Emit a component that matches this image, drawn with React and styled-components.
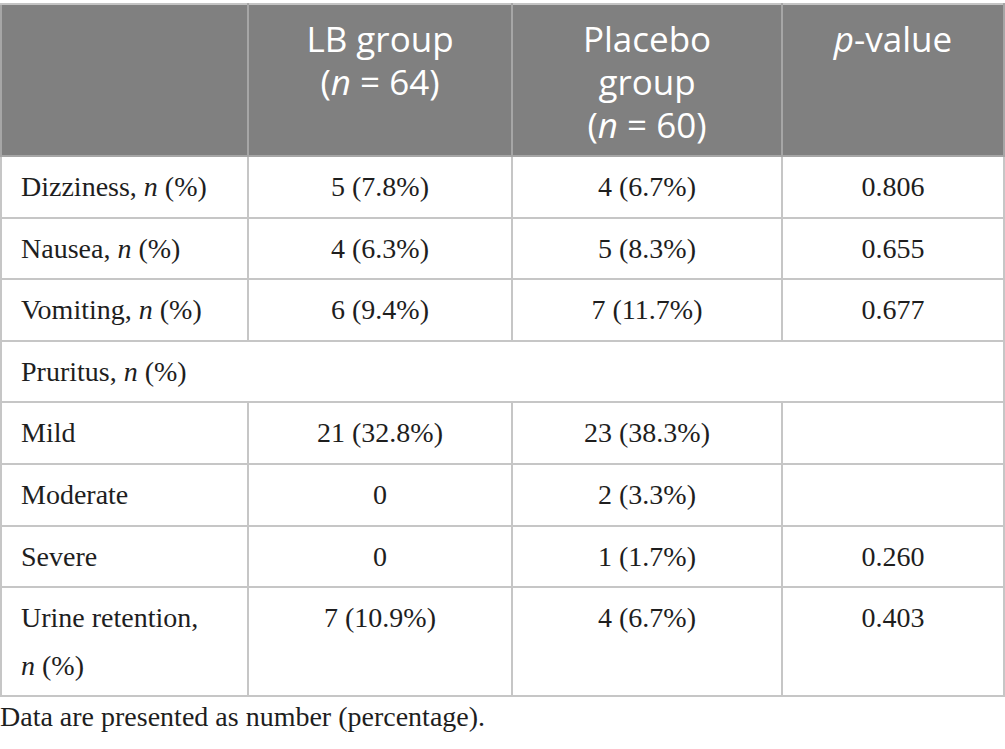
import React from "react";
import styled, { createGlobalStyle } from "styled-components";

const GlobalStyle = createGlobalStyle`
  html, body {
    margin: 0;
    padding: 0;
    background: #ffffff;
  }
`;

const Page = styled.div`
  padding-top: 3px;
  width: 1005px;
`;

const Table = styled.table`
  width: 1003px;
  border-collapse: collapse;
  table-layout: fixed;
  font-family: "Liberation Serif", "Times New Roman", serif;
  color: #1e1e1e;
`;

const HeadRow = styled.tr`
  background: #808080;
`;

const HeadCell = styled.th`
  border: 2px solid #a6a6a6;
  border-top-color: #c4c4c4;
  padding: 12px 8px 9px;
  height: 127px;
  vertical-align: top;
  text-align: center;
  font-family: "Open Sans", "Noto Sans", sans-serif;
  font-weight: 400;
  font-size: 35px;
  line-height: 43px;
  color: #ffffff;
`;

const Cell = styled.td`
  border: 2px solid #c6c6c6;
  padding: ${(p) => (p.label ? "6px 6px 6px 19px" : "6px 8px")};
  vertical-align: top;
  text-align: ${(p) => (p.label ? "left" : "center")};
  font-size: 28px;
  line-height: 47.6px;
`;

const Caption = styled.p`
  margin: 4px 0 0;
  font-family: "Liberation Serif", "Times New Roman", serif;
  font-size: 28px;
  line-height: 32px;
  color: #1e1e1e;
`;

const N = () => <i>n</i>;

const rows = [
  { label: <>Dizziness, <N /> (%)</>, lb: "5 (7.8%)", pl: "4 (6.7%)", p: "0.806" },
  { label: <>Nausea, <N /> (%)</>, lb: "4 (6.3%)", pl: "5 (8.3%)", p: "0.655" },
  { label: <>Vomiting, <N /> (%)</>, lb: "6 (9.4%)", pl: "7 (11.7%)", p: "0.677" },
  { label: <>Pruritus, <N /> (%)</>, span: true },
  { label: "Mild", lb: "21 (32.8%)", pl: "23 (38.3%)", p: "" },
  { label: "Moderate", lb: "0", pl: "2 (3.3%)", p: "" },
  { label: "Severe", lb: "0", pl: "1 (1.7%)", p: "0.260" },
  {
    label: <>Urine retention,<br /><N /> (%)</>,
    lb: "7 (10.9%)",
    pl: "4 (6.7%)",
    p: "0.403",
  },
];

export default function App() {
  return (
    <Page>
      <GlobalStyle />
      <Table>
        <colgroup>
          <col style={{ width: 247 }} />
          <col style={{ width: 264 }} />
          <col style={{ width: 270 }} />
          <col style={{ width: 222 }} />
        </colgroup>
        <thead>
          <HeadRow>
            <HeadCell />
            <HeadCell>
              LB group
              <br />(<i>n</i> = 64)
            </HeadCell>
            <HeadCell>
              Placebo
              <br />group
              <br />(<i>n</i> = 60)
            </HeadCell>
            <HeadCell>
              <i>p</i>-value
            </HeadCell>
          </HeadRow>
        </thead>
        <tbody>
          {rows.map((r, i) =>
            r.span ? (
              <tr key={i}>
                <Cell label colSpan={4}>
                  {r.label}
                </Cell>
              </tr>
            ) : (
              <tr key={i}>
                <Cell label>{r.label}</Cell>
                <Cell>{r.lb}</Cell>
                <Cell>{r.pl}</Cell>
                <Cell>{r.p}</Cell>
              </tr>
            )
          )}
        </tbody>
      </Table>
      <Caption>Data are presented as number (percentage).</Caption>
    </Page>
  );
}
